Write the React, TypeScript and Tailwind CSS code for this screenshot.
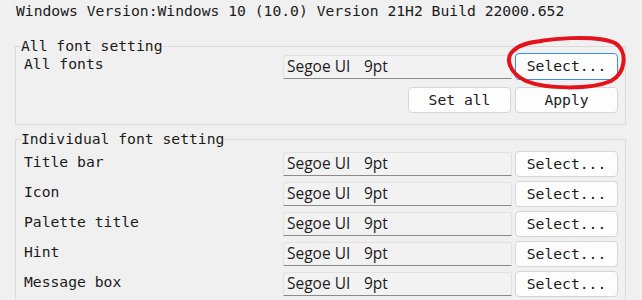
import React from 'react';

const mono = "font-['DejaVu_Sans_Mono','Liberation_Mono',monospace]";

const individualRows = ['Title bar', 'Icon', 'Palette title', 'Hint', 'Message box'];

function FontField() {
  return (
    <div className="w-[229px] h-[24px] flex items-center pl-[3px] bg-[#f2f2f2] border border-[#e1e1e1] border-b-[#8a8a8a] rounded-t-[3px] text-[15.5px] text-[#1b1b1b] font-['Open_Sans','Noto_Sans',sans-serif] leading-none">
      <span className="inline-block w-[77px]">Segoe UI</span>
      <span>9pt</span>
    </div>
  );
}

function Button({ label, focused = false }: { label: string; focused?: boolean }) {
  return (
    <button
      className={
        focused
          ? 'w-[103px] h-[27px] bg-[#fdfdfd] border border-[#3d8ee0] rounded-[4px] text-[#1a1a1a]'
          : 'w-[103px] h-[26px] bg-[#fdfdfd] border border-[#d6d6d6] rounded-[4px] text-[#1a1a1a]'
      }
    >
      {label}
    </button>
  );
}

function FontRow({ label, focused = false }: { label: string; focused?: boolean }) {
  return (
    <div className="flex items-start">
      <div className="flex-1 pl-[8px] mt-[2px] leading-[17px]">{label}</div>
      <div className="self-center">
        <FontField />
      </div>
      <div className="ml-[3px]">
        <Button label="Select..." focused={focused} />
      </div>
    </div>
  );
}

export default function App() {
  return (
    <div
      className={`relative w-[642px] h-[300px] overflow-hidden bg-[#f0f0f0] text-[14.7px] text-[#1a1a1a] ${mono}`}
    >
      <div className="pl-[16px] pt-[2px] leading-[17px] whitespace-nowrap">
        Windows Version:Windows 10 (10.0) Version 21H2 Build 22000.652
      </div>

      <fieldset className="ml-[15px] mt-[18px] w-[611px] border border-[#dadada] pr-[7px] pb-[11px]">
        <legend className="ml-[5px] leading-[17px] pb-[2px]">All font setting</legend>
        <div className="-mt-[3px]">
          <FontRow label="All fonts" focused />
        </div>
        <div className="mt-[7px] flex justify-end gap-[4px]">
          <Button label="Set all" />
          <Button label="Apply" />
        </div>
      </fieldset>

      <fieldset className="ml-[15px] mt-[5px] w-[611px] border border-[#dadada] pr-[7px] pt-[2px] pb-[10px]">
        <legend className="ml-[5px] leading-[17px] pb-[2px]">Individual font setting</legend>
        <div className="flex flex-col gap-[4px]">
          {individualRows.map((r) => (
            <FontRow key={r} label={r} />
          ))}
        </div>
      </fieldset>

      {/* red annotation circle */}
      <svg
        className="absolute left-0 top-0 pointer-events-none"
        width="642"
        height="300"
        viewBox="0 0 642 300"
      >
        <path
          d="M 520 46 C 545 37, 598 35, 615 43 C 628 51, 626 73, 611 81 C 590 90, 545 89, 526 81 C 509 73, 505 58, 513 51 C 519 45, 530 42, 542 41"
          fill="none"
          stroke="#e3121b"
          strokeWidth="4"
          strokeLinecap="round"
        />
      </svg>
    </div>
  );
}
